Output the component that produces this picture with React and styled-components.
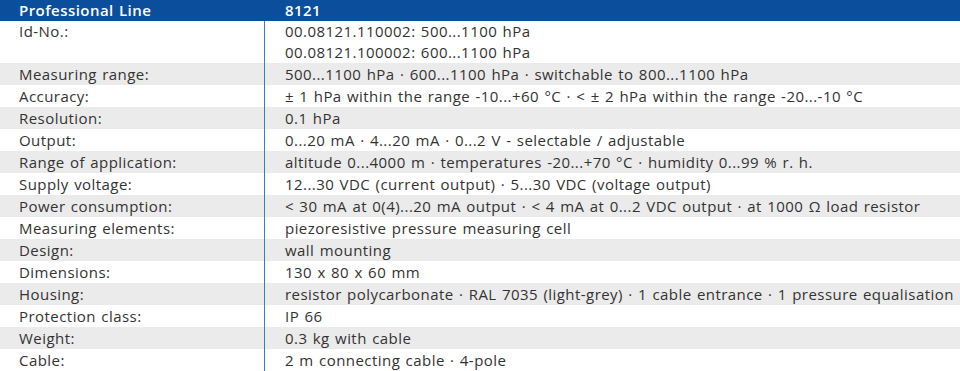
import React from 'react';
import styled, { createGlobalStyle } from 'styled-components';

const GlobalStyle = createGlobalStyle`
  html, body {
    margin: 0;
    padding: 0;
    background: #fff;
  }
`;

const Sheet = styled.div`
  width: 960px;
  height: 371px;
  overflow: hidden;
  font-family: 'Open Sans', 'DejaVu Sans', sans-serif;
  font-size: 15px;
  letter-spacing: 0.45px;
  word-spacing: 1px;
  color: #333;
`;

const Row = styled.div`
  display: grid;
  grid-template-columns: 264px 1fr;
  background: ${(p) => (p.$shaded ? '#ebebeb' : '#fff')};
`;

const HeadRow = styled(Row)`
  background: #0b4f9c;
  color: #fff;
  font-weight: 600;
  height: 21px;
  line-height: 21px;
`;

const Label = styled.div`
  padding-left: 19px;
  line-height: ${(p) => p.$lh || 22}px;
  white-space: nowrap;
`;

const Value = styled.div`
  padding-left: 20px;
  border-left: 1px solid ${(p) => (p.$head ? 'transparent' : '#3d7cc9')};
  white-space: nowrap;
`;

const Line = styled.div`
  line-height: ${(p) => p.$lh || 22}px;
`;

const specs = [
  ['Measuring range:', '500...1100 hPa · 600...1100 hPa · switchable to 800...1100 hPa'],
  ['Accuracy:', '± 1 hPa within the range -10...+60 °C · < ± 2 hPa within the range -20...-10 °C'],
  ['Resolution:', '0.1 hPa'],
  ['Output:', '0...20 mA · 4...20 mA · 0...2 V - selectable / adjustable'],
  ['Range of application:', 'altitude 0...4000 m · temperatures -20...+70 °C · humidity 0...99 % r. h.'],
  ['Supply voltage:', '12...30 VDC (current output) · 5...30 VDC (voltage output)'],
  ['Power consumption:', '< 30 mA at 0(4)...20 mA output · < 4 mA at 0...2 VDC output · at 1000 Ω load resistor'],
  ['Measuring elements:', 'piezoresistive pressure measuring cell'],
  ['Design:', 'wall mounting'],
  ['Dimensions:', '130 x 80 x 60 mm'],
  ['Housing:', 'resistor polycarbonate · RAL 7035 (light-grey) · 1 cable entrance · 1 pressure equalisation'],
  ['Protection class:', 'IP 66'],
  ['Weight:', '0.3 kg with cable'],
  ['Cable:', '2 m connecting cable · 4-pole'],
];

export default function App() {
  return (
    <Sheet>
      <GlobalStyle />
      <HeadRow>
        <Label $lh={21}>Professional Line</Label>
        <Value $head>8121</Value>
      </HeadRow>
      <Row>
        <Label $lh={21}>Id-No.:</Label>
        <Value>
          <Line $lh={21}>00.08121.110002: 500...1100 hPa</Line>
          <Line $lh={21}>00.08121.100002: 600...1100 hPa</Line>
        </Value>
      </Row>
      {specs.map(([label, value], i) => (
        <Row key={label} $shaded={i % 2 === 0}>
          <Label>{label}</Label>
          <Value>
            <Line>{value}</Line>
          </Value>
        </Row>
      ))}
    </Sheet>
  );
}
